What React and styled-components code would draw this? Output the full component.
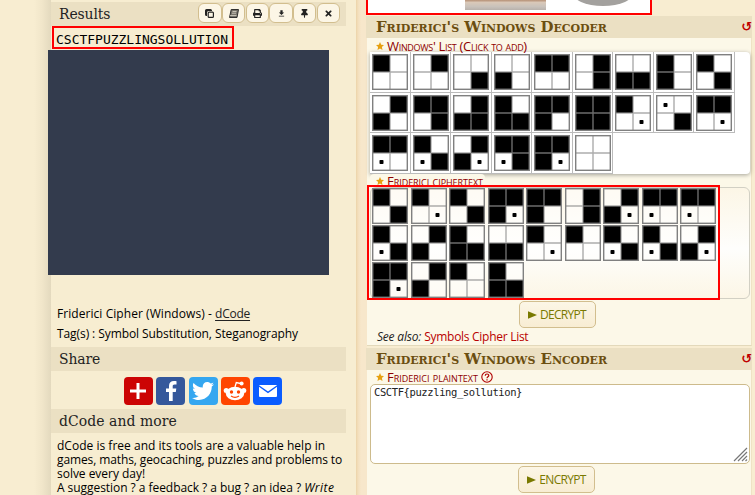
import React from 'react';
import styled, { createGlobalStyle } from 'styled-components';
import { FaPrint, FaThumbtack, FaTimes, FaTwitter } from 'react-icons/fa';
import { MdDownload } from 'react-icons/md';

const Global = createGlobalStyle`
  * { box-sizing: border-box; }
  body { margin: 0; background: #f8edd1; font: 12px/14px "Open Sans", "Noto Sans", sans-serif; color: #000; overflow: hidden; }
`;

const Page = styled.div`
  display: grid;
  grid-template-columns: 51px 305px 11px 385px 3px;
  width: 755px;
  height: 495px;
  overflow: hidden;
`;

const Margin = styled.div`
  background: linear-gradient(90deg, #f8edd1 34px, #f1e6ca 42px, #e3d9be 51px);
`;

const Sidebar = styled.aside`
  background: #f7edd1;
  padding: 2px 10px 0 0;
  height: 495px;
`;

const Gutter = styled.div`
  background: linear-gradient(90deg, #ecd3a8 0, #f3dfbc 2px, #f7e7cb 5px, #f7e7cb 100%);
`;

const SideTitle = styled.h3`
  display: flex;
  justify-content: space-between;
  height: 24px;
  margin: 0;
  padding: 0 0 0 8px;
  background: #ebe0c3;
  color: #222;
  font: 400 15.5px/24px "DejaVu Serif Condensed", "DejaVu Serif", serif;
  letter-spacing: ${(p) => p.$track || '-0.1px'};
`;

const ToolGroup = styled.div`
  display: flex;
  gap: 0.5px;
  padding: 1px 6px 0 0;
`;

const ToolButton = styled.button`
  display: flex;
  align-items: center;
  justify-content: center;
  width: 23.2px;
  height: 20px;
  padding: 0;
  border: 1px solid #d2be8e;
  border-radius: 6px;
  background: #fcf6e6;
  color: #222;
  font-size: 9px;
`;

const Result = styled.div`
  width: 182px;
  height: 23px;
  margin: 0 0 0 1px;
  padding-left: 2px;
  border: 2px solid #f00;
  font: 13px/23px "DejaVu Sans Mono", monospace;
  letter-spacing: -0.01px;
`;

const Cover = styled.div`
  width: 281px;
  height: 225px;
  margin: 1px 0 29px -3px;
  background: #333b4d;
`;

const Details = styled.div`
  margin-bottom: 3px;
`;

const SideLine = styled.div`
  height: 20px;
  padding-left: 6px;
  line-height: 20px;
  white-space: pre;
  letter-spacing: ${(p) => p.$track};
`;

const Underlined = styled.a`
  color: #222;
  text-decoration: underline;
  text-underline-offset: 2px;
  letter-spacing: -0.24px;
`;

const ShareRow = styled.div`
  display: flex;
  justify-content: center;
  gap: 3.4px;
  height: 38px;
  padding: 6px 0 0 9px;
`;

const ShareButton = styled.a`
  display: flex;
  align-items: center;
  justify-content: center;
  width: 29px;
  height: 28px;
  border-radius: 4px;
  background: ${(p) => p.$color};
  color: #fff;
  font-size: 22px;
`;

const About = styled.div`
  padding: 6px 0 0 6px;
  white-space: nowrap;
`;

const AboutLine = styled.div`
  height: 14px;
  letter-spacing: ${(p) => p.$track};
  em { letter-spacing: 0.45px; }
`;

const Main = styled.main`
  display: flex;
  flex-direction: column;
  height: 495px;
`;

const Illustration = styled.div`
  display: flex;
  flex: none;
  width: 286px;
  height: 15px;
  margin: 0 0 1px -1px;
  border: 2px solid #f00;
  border-top: 0;
  background: #fff;
`;

const Heading = styled.h2`
  display: flex;
  flex: none;
  justify-content: space-between;
  align-items: center;
  height: 22px;
  margin: 0 0 0 -1px;
  padding: 0 0 0 10px;
  background: #ebe0c3;
  color: #6b4e10;
  font: small-caps bold 15px/21px "DejaVu Serif", serif;
  letter-spacing: -0.05px;
`;

const Reset = styled.span`
  color: #c00000;
  font: bold 13px/22px "DejaVu Sans", sans-serif;
`;

const Panel = styled.section`
  flex: none;
  height: ${(p) => p.$height};
  margin-bottom: 2px;
  padding: 0 2px 0 3px;
  background: #fcf8e8;
  border-right: 1px solid #efe3c5;
  border-bottom: 1px solid #e3d9bb;
`;

const Label = styled.div`
  display: flex;
  align-items: center;
  gap: 3px;
  width: max-content;
  height: ${(p) => p.$height};
  padding: ${(p) => p.$pad};
  background: #fcf8e8;
  border-radius: 4px;
  color: #8e0000;
  font: small-caps 13px/14px "Open Sans", "Noto Sans", sans-serif;
  letter-spacing: ${(p) => p.$track};
  white-space: nowrap;
`;

/* Keeps a label above the drop shadow of the list before it. */
const RaisedLabel = styled(Label)`
  position: relative;
`;

const SymbolList = styled.div`
  display: grid;
  grid-template-columns: repeat(9, 40.55px);
  grid-auto-rows: 40.5px;
  width: 380px;
  height: 122px;
  border-radius: 0 4px 4px 0;
  background: #fff;
  box-shadow: 0 1px 4px rgba(0, 0, 0, 0.35);
`;

const SymbolCell = styled.div`
  padding: 2px 0 0 2px;
  border-right: 1px solid #bbb;
  border-bottom: 1px solid #bbb;
`;

const Glyph = styled.svg`
  display: block;
  width: 36px;
  height: 36px;
`;

const CipherWrap = styled.div`
  position: relative;
  height: 113px;
`;

const Cipher = styled.div`
  display: grid;
  grid-template-columns: repeat(9, 38.5px);
  grid-auto-rows: 37px;
  width: 380px;
  height: 112px;
  padding: 0 0 0 1px;
  border: 1px solid #d2d0c4;
  border-radius: 6px;
  background: linear-gradient(#fcf6e6, #fefefc 55%, #fcf6e6);
`;

const Highlight = styled.div`
  position: absolute;
  left: -3px;
  top: -2px;
  width: 353px;
  height: 115px;
  border: 2px solid #f00;
`;

const ActionRow = styled.div`
  display: flex;
  justify-content: center;
  height: ${(p) => p.$height};
  padding: ${(p) => p.$pad};
`;

const Action = styled.button`
  display: flex;
  align-items: center;
  justify-content: center;
  gap: 3px;
  width: 77px;
  height: 27px;
  padding: 1px 0 0;
  border: 1px solid #d2be8e;
  border-radius: 5px;
  background: linear-gradient(#fcf6e6, #f8edd3);
  color: #797900;
  font: 12px/14px "Open Sans", "Noto Sans", sans-serif;
  letter-spacing: -0.7px;
`;

const SeeAlso = styled.div`
  padding-left: 7px;
  line-height: 18px;
  color: #222;
  em { letter-spacing: -0.2px; }
`;

const RedLink = styled.a`
  color: #b90000;
  letter-spacing: -0.28px;
`;

const PlainField = styled.div`
  display: flex;
  justify-content: space-between;
  width: 380px;
  height: 80px;
  padding: 0 1px 0 3px;
  border: 1px solid #cdbb8c;
  border-radius: 5px;
  background: #fff;
  color: #222;
  font: 10.5px/14px "DejaVu Sans Mono", monospace;
  letter-spacing: -0.4px;
`;

const Grip = styled.svg`
  align-self: flex-end;
  width: 15px;
  height: 15px;
  margin-bottom: 1px;
`;

/* Each symbol lists its four panes in reading order: 0 empty, 1 filled, 2 dotted. */
const LIST = '1000 0100 0001 0010 1100 0101 0011 1010 1001 0110 1101 0111 1011 1110 1111 1002 2001 1102 1120 1021 0112 1121 1112 0000'.split(' ');
const MESSAGE = '1001 1002 1001 1112 1110 0101 0112 1120 1120 1021 0110 1011 0011 1002 1000 1021 1021 0112 1112 0110 1000 1011'.split(' ');

function WindowGlyph({ code }) {
  return (
    <Glyph viewBox="0 0 36 36">
      <rect width="36" height="36" fill="#fff" fillOpacity="0.55" />
      {[...code].map((pane, i) => {
        const x = 1 + (i % 2) * 17;
        const y = 1 + (i > 1 ? 17 : 0);
        if (pane === '1') return <rect key={i} x={x} y={y} width="17" height="17" fill="#000" />;
        if (pane === '2') return <rect key={i} x={x + 6.5} y={y + 7} width="4" height="4" rx="0.8" fill="#000" />;
        return null;
      })}
      <path d="M18 1V35M1 18H35" stroke="#909090" strokeOpacity="0.75" strokeWidth="1.4" />
      <rect x="0.7" y="0.7" width="34.6" height="34.6" fill="none" stroke="#808080" strokeWidth="1.4" />
    </Glyph>
  );
}

const Star = () => (
  <svg width="8" height="8" viewBox="0 0 20 20">
    <path d="M10 0l3 6.6 7 .8-5.2 4.8L16.3 20 10 16l-6.3 4 1.5-7.8L0 7.4l7-.8z" fill="#e6a010" />
  </svg>
);

const Help = () => (
  <svg width="12" height="12" viewBox="0 0 12 12" fill="none" stroke="#b00000">
    <circle cx="6" cy="6" r="5.2" strokeWidth="1.1" />
    <path d="M4.2 4.7C4.3 2.5 7.8 2.5 7.8 4.5 7.8 5.8 6 5.8 6 7.3M6 8.3v1.2" strokeWidth="1.2" />
  </svg>
);

const Play = () => (
  <svg width="9" height="8" viewBox="0 0 9 8"><path d="M0 0.3L9 4 0 7.7z" fill="#797900" /></svg>
);

const Photo = () => (
  <svg width="282" height="13" viewBox="0 0 282 13">
    <defs>
      <linearGradient id="wood" x1="0" y1="0" x2="0" y2="1">
        <stop offset="0" stopColor="#b58f74" />
        <stop offset="0.25" stopColor="#d9c8b8" />
        <stop offset="0.65" stopColor="#c9c2bb" />
        <stop offset="1" stopColor="#b9b2ac" />
      </linearGradient>
    </defs>
    <rect x="97" width="81" height="10" fill="url(#wood)" />
    <ellipse cx="235" cy="-8" rx="31" ry="14" fill="#a3a19e" />
  </svg>
);

const Copy = () => (
  <svg width="9" height="9" viewBox="0 0 9 9">
    <path d="M1.5 0h4A1.5 1.5 0 0 1 7 1.5V2H3.5A1.5 1.5 0 0 0 2 3.5V7h-.5A1.5 1.5 0 0 1 0 5.5v-4A1.5 1.5 0 0 1 1.5 0z" fill="#222" />
    <rect x="3.2" y="3.2" width="5.2" height="5.2" rx="0.9" fill="none" stroke="#222" strokeWidth="1.2" />
  </svg>
);

const Notes = () => (
  <svg width="10" height="9" viewBox="0 0 10 9">
    <path d="M2.2.5H9.5L8 8.5H.5z" fill="#77736a" stroke="#222" strokeWidth="0.9" />
    <path d="M3.5 2.5h4M3 4.2h4M1 6.5h6.5" stroke="#fcf6e6" strokeWidth="0.6" />
  </svg>
);

const Plus = () => (
  <svg width="18" height="18" viewBox="0 0 18 18"><path d="M9 1v16M1 9h16" stroke="#fff" strokeWidth="3" /></svg>
);

const Facebook = () => (
  <svg width="22" height="24" viewBox="0 0 22 24">
    <path d="M9 22V13H6V9.5h3V7c0-3.3 2-5 4.9-5 1.3 0 2.100.1 2.600.2v3.200h-1.900c-1.500 0-1.900.8-1.900 1.800v2.300h3.600l-.5 3.500h-3.100v9z" fill="#fff" />
  </svg>
);

const Reddit = () => (
  <svg width="24" height="22" viewBox="0 0 24 22">
    <path d="M12 7l1.3-4.500 4.200 1" fill="none" stroke="#fff" strokeWidth="1.3" />
    <circle cx="18.6" cy="3.5" r="2" fill="#fff" />
    <circle cx="3.2" cy="10.5" r="2.5" fill="#fff" />
    <circle cx="20.8" cy="10.5" r="2.5" fill="#fff" />
    <ellipse cx="12" cy="13.5" rx="9.2" ry="6.7" fill="#fff" />
    <circle cx="8.5" cy="12" r="1.7" fill="#ff4500" />
    <circle cx="15.5" cy="12" r="1.7" fill="#ff4500" />
    <path d="M8 16q4 2.6 8 0" fill="none" stroke="#ff4500" strokeWidth="1.2" />
  </svg>
);

const Mail = () => (
  <svg width="20" height="14" viewBox="0 0 20 14">
    <rect x="1" y="1" width="18" height="12" rx="1" fill="#fff" />
    <path d="M1 2l9 6.3L19 2" fill="none" stroke="#0a5cff" strokeWidth="1.4" />
  </svg>
);

const TOOLS = [Copy, Notes, FaPrint, MdDownload, FaThumbtack, FaTimes];
const SHARES = [
  ['#cc0404', Plus],
  ['#35589b', Facebook],
  ['#35a7f0', FaTwitter],
  ['#ff4500', Reddit],
  ['#0a5cff', Mail],
];

export default function App() {
  return (
    <>
      <Global />
      <Page>
        <Margin />
        <Sidebar>
          <SideTitle>
            Results
            <ToolGroup>
              {TOOLS.map((Icon, i) => <ToolButton key={i}><Icon /></ToolButton>)}
            </ToolGroup>
          </SideTitle>
          <Result>CSCTFPUZZLINGSOLLUTION</Result>
          <Cover />
          <Details>
            <SideLine $track="0.06px">Friderici Cipher (Windows) - <Underlined>dCode</Underlined></SideLine>
            <SideLine $track="-0.085px">Tag(s) : Symbol Substitution, Steganography</SideLine>
          </Details>
          <SideTitle>Share</SideTitle>
          <ShareRow>
            {SHARES.map(([color, Icon]) => <ShareButton key={color} $color={color}><Icon /></ShareButton>)}
          </ShareRow>
          <SideTitle $track="0.08px">dCode and more</SideTitle>
          <About>
            <AboutLine $track="0.02px">dCode is free and its tools are a valuable help in</AboutLine>
            <AboutLine $track="-0.11px">games, maths, geocaching, puzzles and problems to</AboutLine>
            <AboutLine $track="-0.03px">solve every day!</AboutLine>
            <AboutLine $track="-0.05px">A suggestion ? a feedback ? a bug ? an idea ? <em>Write</em></AboutLine>
          </About>
        </Sidebar>
        <Gutter />
        <Main>
          <Illustration><Photo /></Illustration>
          <Heading>Friderici's Windows Decoder<Reset>↺</Reset></Heading>
          <Panel $height="308px">
            <Label $height="14px" $pad="2px 0 0 6px" $track="-0.31px"><Star />Windows' List (Click to add)</Label>
            <SymbolList>
              {LIST.map((code, i) => <SymbolCell key={i}><WindowGlyph code={code} /></SymbolCell>)}
            </SymbolList>
            <RaisedLabel $height="13px" $pad="0 2px 0 6px" $track="-0.04px"><Star />Friderici ciphertext</RaisedLabel>
            <CipherWrap>
              <Cipher>
                {MESSAGE.map((code, i) => <WindowGlyph key={i} code={code} />)}
              </Cipher>
              <Highlight />
            </CipherWrap>
            <ActionRow $height="28px" $pad="1px 5px 0 0"><Action><Play />DECRYPT</Action></ActionRow>
            <SeeAlso><em>See also:</em> <RedLink>Symbols Cipher List</RedLink></SeeAlso>
          </Panel>
          <Heading>Friderici's Windows Encoder<Reset>↺</Reset></Heading>
          <Panel $height="140px">
            <Label $height="14px" $pad="0 0 0 6px" $track="-0.01px"><Star />Friderici plaintext<Help /></Label>
            <PlainField>
              CSCTF&#123;puzzling_sollution&#125;
              <Grip viewBox="0 0 15 15"><path d="M1 14L14 1M5 14l9-9M9 14l5-5M12.5 14l1.5-1.5" stroke="#777" strokeWidth="1.2" /></Grip>
            </PlainField>
            <ActionRow $height="30px" $pad="2px 6px 0 0"><Action><Play />ENCRYPT</Action></ActionRow>
          </Panel>
        </Main>
      </Page>
    </>
  );
}
